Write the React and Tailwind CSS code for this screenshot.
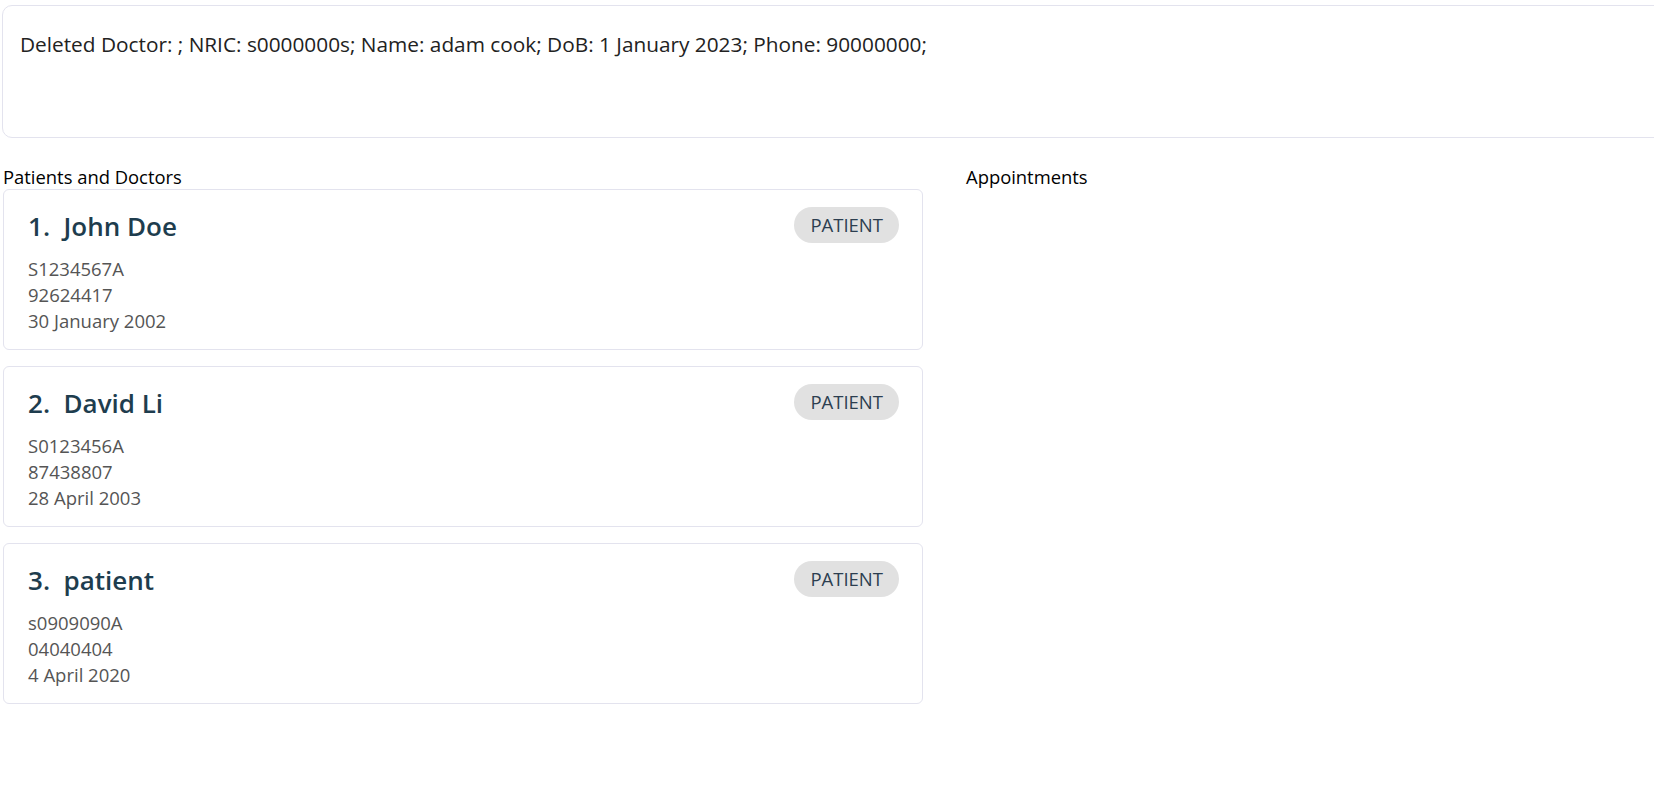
const PEOPLE = [
  { name: "John Doe", nric: "S1234567A", phone: "92624417", dob: "30 January 2002" },
  { name: "David Li", nric: "S0123456A", phone: "87438807", dob: "28 April 2003" },
  { name: "patient", nric: "s0909090A", phone: "04040404", dob: "4 April 2020" },
];

function PersonCard({ index, person }) {
  return (
    <div className="h-[161px] rounded-md border border-[#e3e3ee] bg-white px-6 pt-[17px]">
      <div className="flex h-[36px] items-center justify-between">
        <h2 className="mt-[2px] text-[26px] font-semibold leading-[36px] text-[#1e3d4e]">
          {index}.&nbsp;&nbsp;{person.name}
        </h2>
        <span className="mr-[-1px] flex h-[36px] items-center rounded-full bg-[#e1e1e1] px-[16px] text-[18.5px] text-[#2c3e50]">
          PATIENT
        </span>
      </div>
      <div className="mt-[13px] text-[18.5px] leading-[26px] text-[#555555]">
        <p>{person.nric}</p>
        <p>{person.phone}</p>
        <p>{person.dob}</p>
      </div>
    </div>
  );
}

export default function App() {
  return (
    <div className="min-h-screen overflow-hidden bg-white font-['Open_Sans',sans-serif] text-black">
      <div className="pl-[2px] pt-[5px]">
        <div className="h-[133px] w-[1700px] rounded-[10px] border border-[#e3e3ee] px-[17px] pt-[23px] text-[20.8px] text-[#222222]">
          Deleted Doctor: ; NRIC: s0000000s; Name: adam cook; DoB: 1 January 2023; Phone: 90000000;
        </div>
      </div>

      <div className="flex pt-[28px]">
        <section className="w-[924px] pl-[3px]">
          <h3 className="text-[18.4px] leading-[22px]">Patients and Doctors</h3>
          <div className="mt-[1px] flex w-[920px] flex-col gap-[16px]">
            {PEOPLE.map((p, i) => (
              <PersonCard key={p.nric} index={i + 1} person={p} />
            ))}
          </div>
        </section>
        <section className="pl-[42px]">
          <h3 className="text-[18.4px] leading-[22px]">Appointments</h3>
        </section>
      </div>
    </div>
  );
}
